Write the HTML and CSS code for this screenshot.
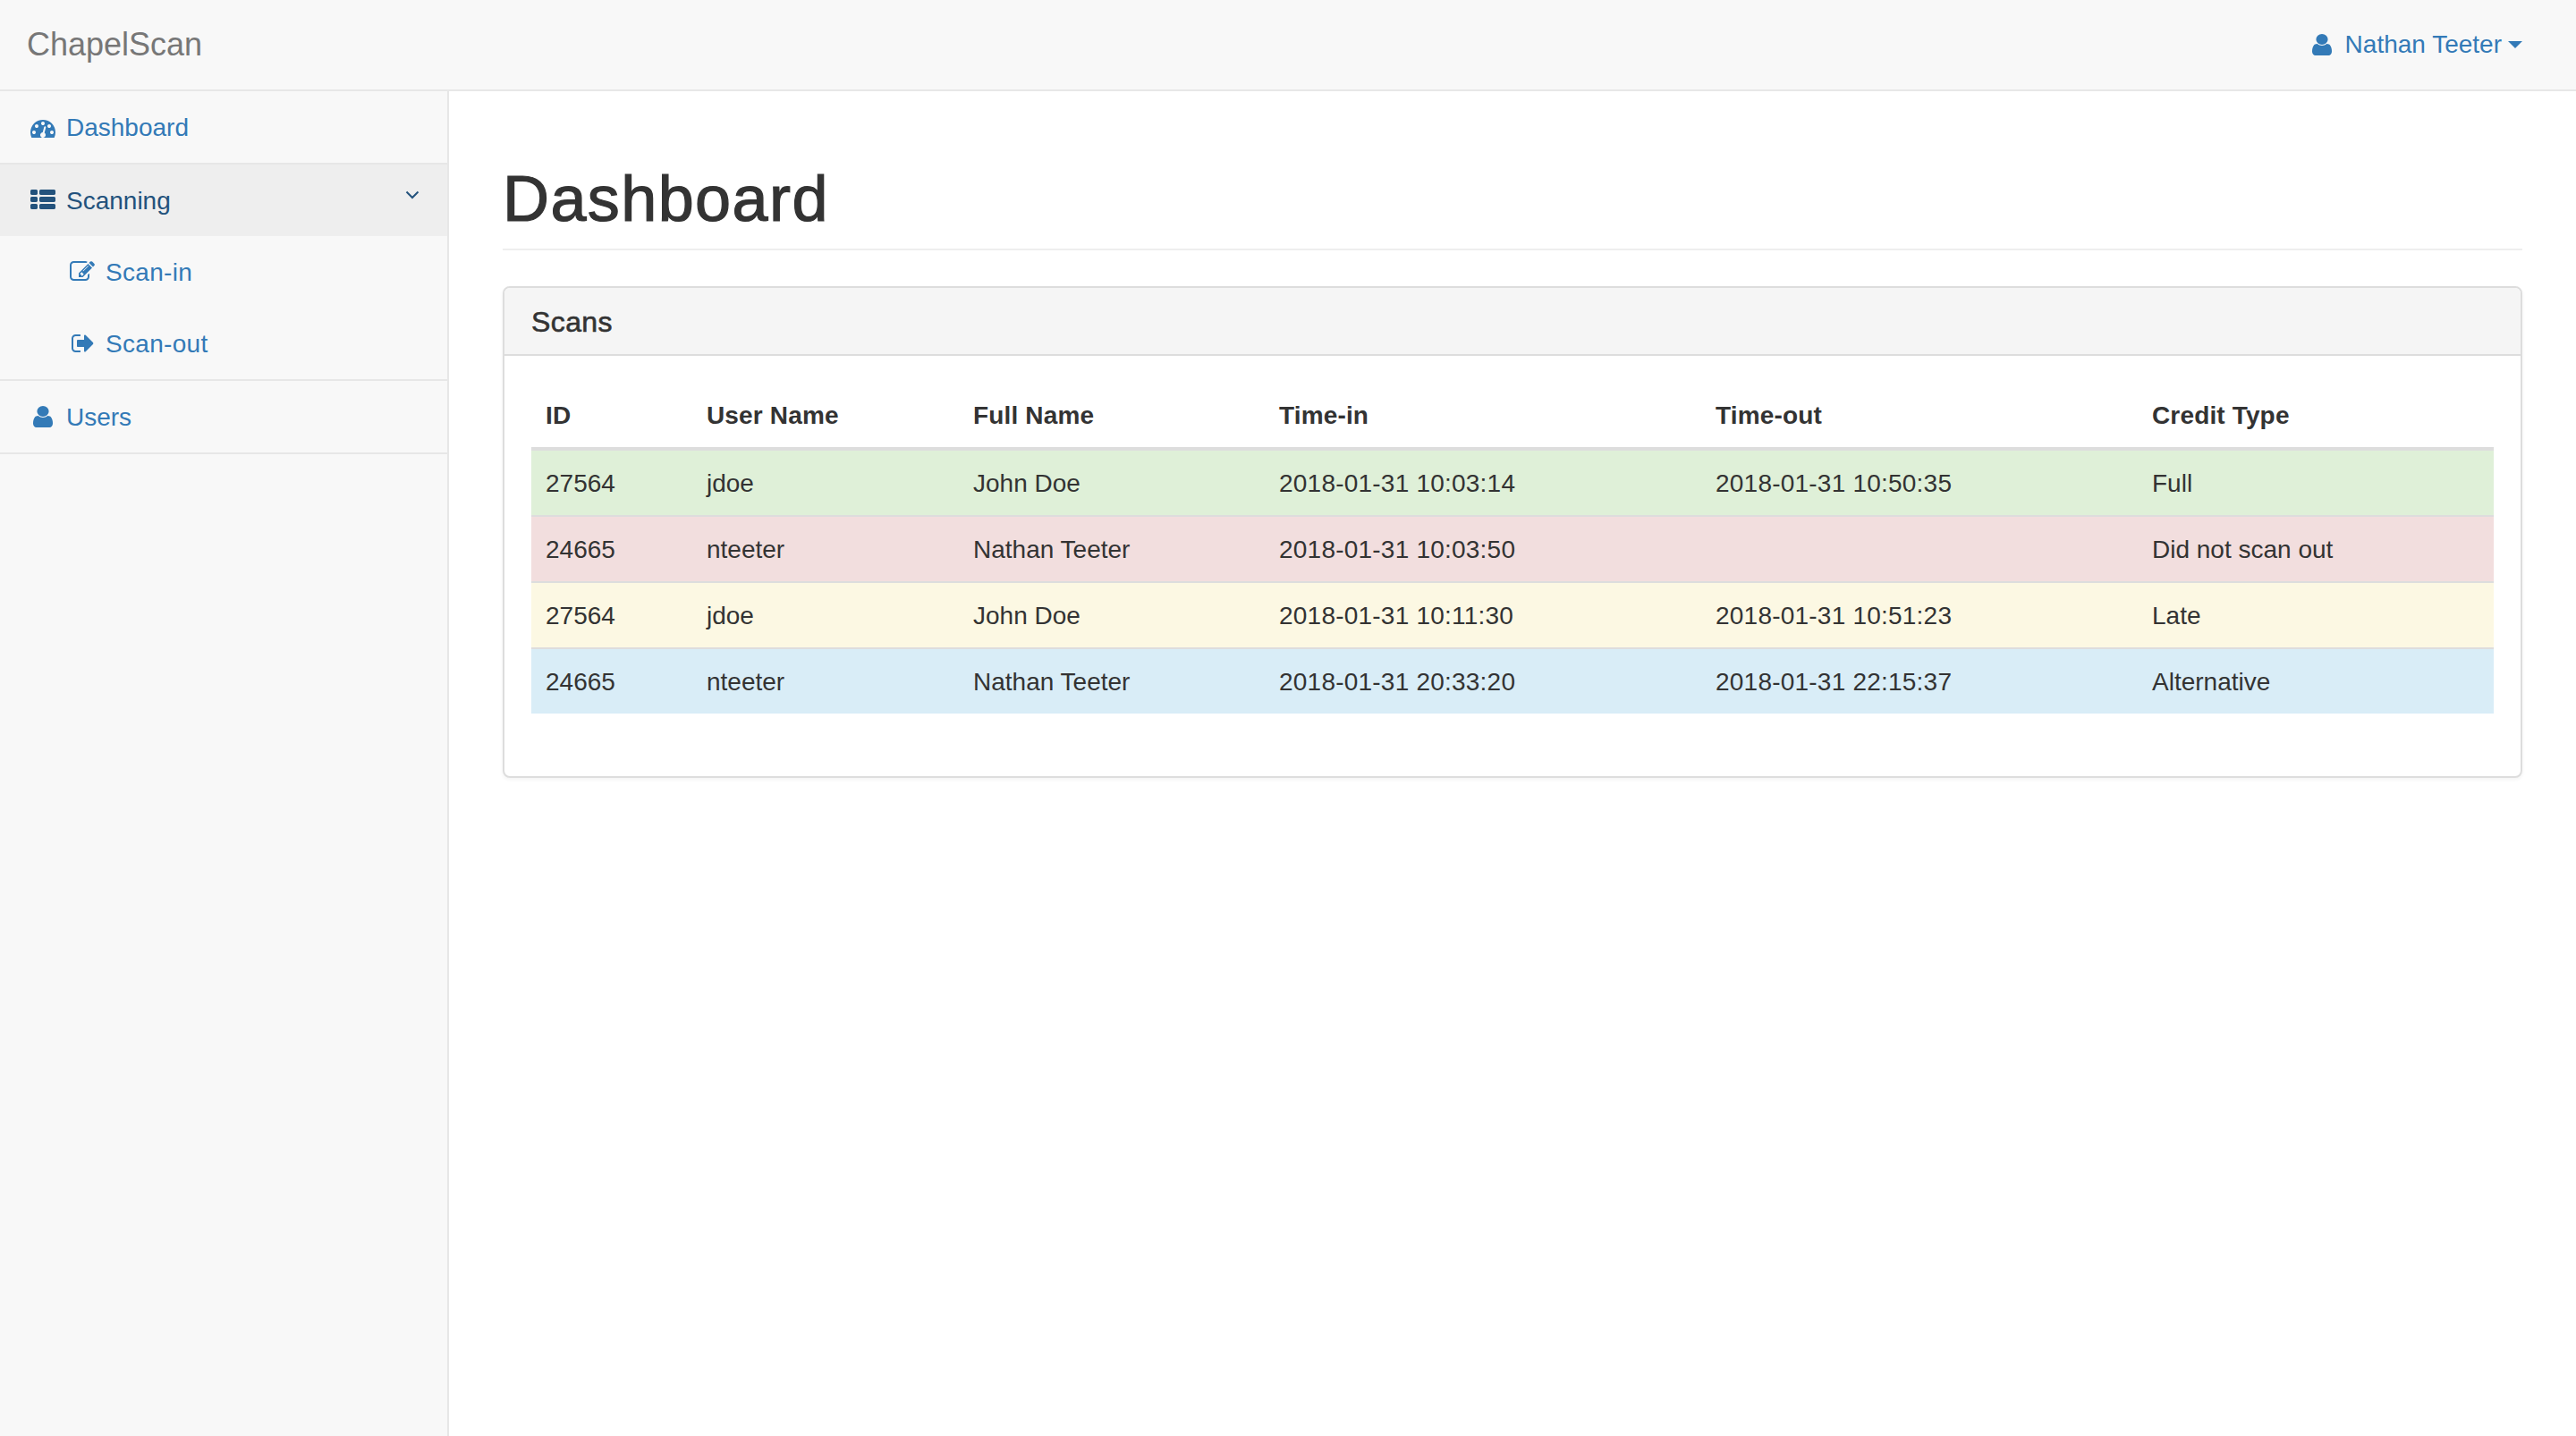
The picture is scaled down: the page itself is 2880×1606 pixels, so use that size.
FILE: index.html
```html
<!DOCTYPE html>
<html lang="en">
<head>
<meta charset="utf-8">
<title>ChapelScan</title>
<link rel="stylesheet" href="styles.css">
</head>
<body>
<svg class="sprite" xmlns="http://www.w3.org/2000/svg">
  <symbol id="i-dashboard" viewBox="0 128 1792 1408" preserveAspectRatio="none"><path d="M384 1152q0-53-37.5-90.5t-90.5-37.5-90.5 37.5-37.5 90.5 37.5 90.5 90.5 37.5 90.5-37.5 37.5-90.5zm192-448q0-53-37.5-90.5t-90.5-37.5-90.5 37.5-37.5 90.5 37.5 90.5 90.5 37.5 90.5-37.5 37.5-90.5zm428 481l101-382q6-26-7.5-48.5t-38.5-29.5-48 6.5-30 39.5l-101 382q-60 5-107 43.5t-63 98.5q-20 77 20 146t117 89 146-20 89-117q16-60-6-117t-72-91zm660-33q0-53-37.5-90.5t-90.5-37.5-90.5 37.5-37.5 90.5 37.5 90.5 90.5 37.5 90.5-37.5 37.5-90.5zm-640-640q0-53-37.5-90.5t-90.5-37.5-90.5 37.5-37.5 90.5 37.5 90.5 90.5 37.5 90.5-37.5 37.5-90.5zm448 192q0-53-37.5-90.5t-90.5-37.5-90.5 37.5-37.5 90.5 37.5 90.5 90.5 37.5 90.5-37.5 37.5-90.5zm320 448q0 261-141 483-19 29-54 29h-1402q-35 0-54-29-141-221-141-483 0-182 71-348t191-286 286-191 348-71 348 71 286 191 191 286 71 348z"/></symbol>
  <symbol id="i-list" viewBox="0 128 1792 1408" preserveAspectRatio="none"><path d="M512 1248v192q0 40-28 68t-68 28h-320q-40 0-68-28t-28-68v-192q0-40 28-68t68-28h320q40 0 68 28t28 68zm0-512v192q0 40-28 68t-68 28h-320q-40 0-68-28t-28-68v-192q0-40 28-68t68-28h320q40 0 68 28t28 68zm1280 512v192q0 40-28 68t-68 28h-960q-40 0-68-28t-28-68v-192q0-40 28-68t68-28h960q40 0 68 28t28 68zm-1280-1024v192q0 40-28 68t-68 28h-320q-40 0-68-28t-28-68v-192q0-40 28-68t68-28h320q40 0 68 28t28 68zm1280 512v192q0 40-28 68t-68 28h-960q-40 0-68-28t-28-68v-192q0-40 28-68t68-28h960q40 0 68 28t28 68zm0-512v192q0 40-28 68t-68 28h-960q-40 0-68-28t-28-68v-192q0-40 28-68t68-28h960q40 0 68 28t28 68z"/></symbol>
  <symbol id="i-edit" viewBox="0 128 1792 1408" preserveAspectRatio="none"><path d="M888 1184l116-116-152-152-116 116v56h96v96h56zm440-720q-16-16-33 1l-350 350q-17 17-1 33t33-1l350-350q17-17 1-33zm80 594v190q0 119-84.5 203.5t-203.5 84.5h-832q-119 0-203.5-84.5t-84.5-203.5v-832q0-119 84.5-203.5t203.5-84.5h832q63 0 117 25 15 7 18 23 3 17-9 29l-49 49q-14 14-32 8-23-6-45-6h-832q-66 0-113 47t-47 113v832q0 66 47 113t113 47h832q66 0 113-47t47-113v-126q0-13 9-22l64-64q15-15 35-7t20 29zm-96-738l288 288-672 672h-288v-288zm444 132l-92 92-288-288 92-92q28-28 68-28t68 28l152 152q28 28 28 68t-28 68z"/></symbol>
  <symbol id="i-signout" viewBox="0 256 1632 1280" preserveAspectRatio="none"><path d="M704 1440q0 4 1 20t.5 26.5-3 23.5-10 19.5-20.5 6.5h-320q-119 0-203.5-84.5t-84.5-203.5v-704q0-119 84.5-203.5t203.5-84.5h320q13 0 22.5 9.5t9.5 22.5q0 4 1 20t.5 26.5-3 23.5-10 19.5-20.5 6.5h-320q-66 0-113 47t-47 113v704q0 66 47 113t113 47h312l11.5 1 11.5 3 8 5.5 7 9 2 13.5zm928-544q0 26-19 45l-544 544q-19 19-45 19t-45-19-19-45v-288h-448q-26 0-45-19t-19-45v-384q0-26 19-45t45-19h448v-288q0-26 19-45t45-19 45 19l544 544q19 19 19 45z"/></symbol>
  <symbol id="i-user" viewBox="256 128 1280 1536" preserveAspectRatio="none"><path d="M1536 1399q0 109-62.5 187t-150.5 78h-854q-88 0-150.5-78t-62.5-187q0-85 8.5-160.5t31.5-152 58.5-131 94-89 134.5-34.5q131 128 313 128t313-128q76 0 134.5 34.5t94 89 58.5 131 31.5 152 8.5 160.5zm-256-887q0 159-112.5 271.5t-271.5 112.5-271.5-112.5-112.5-271.5 112.5-271.5 271.5-112.5 271.5 112.5 112.5 271.5z"/></symbol>
</svg>

<header class="navbar">
  <a class="brand" href="#">ChapelScan</a>
  <a class="user-menu" href="#">
    <span class="icon-box"><svg class="icon icon-user"><use href="#i-user"/></svg></span>
    <span>Nathan Teeter</span>
    <span class="caret"></span>
  </a>
</header>

<div class="layout">
  <nav class="sidebar">
    <ul class="side-nav">
      <li class="side-item">
        <a class="side-link" href="#"><span class="icon-box"><svg class="icon icon-wide"><use href="#i-dashboard"/></svg></span>Dashboard</a>
      </li>
      <li class="side-item">
        <a class="side-link side-link-active" href="#">
          <span class="icon-box"><svg class="icon icon-wide icon-raise"><use href="#i-list"/></svg></span>Scanning
          <svg class="chevron" viewBox="0 0 16 10"><path d="M1.5 1.5 8 8l6.5-6.5"/></svg>
        </a>
        <ul class="sub-nav">
          <li><a class="side-link" href="#"><span class="icon-box"><svg class="icon icon-wide icon-raise"><use href="#i-edit"/></svg></span>Scan-in</a></li>
          <li><a class="side-link" href="#"><span class="icon-box"><svg class="icon icon-signout icon-lift"><use href="#i-signout"/></svg></span>Scan-out</a></li>
        </ul>
      </li>
      <li class="side-item">
        <a class="side-link" href="#"><span class="icon-box"><svg class="icon icon-user icon-lift"><use href="#i-user"/></svg></span>Users</a>
      </li>
    </ul>
  </nav>

  <main class="content">
    <h1 class="page-title">Dashboard</h1>
    <section class="panel">
      <div class="panel-heading">Scans</div>
      <div class="panel-body">
        <table class="scans">
          <colgroup>
            <col class="col-id"><col class="col-user"><col class="col-name"><col class="col-time"><col class="col-time"><col class="col-credit">
          </colgroup>
          <thead>
            <tr><th>ID</th><th>User Name</th><th>Full Name</th><th>Time-in</th><th>Time-out</th><th>Credit Type</th></tr>
          </thead>
          <tbody>
            <tr class="row-success"><td>27564</td><td>jdoe</td><td>John Doe</td><td>2018-01-31 10:03:14</td><td>2018-01-31 10:50:35</td><td>Full</td></tr>
            <tr class="row-danger"><td>24665</td><td>nteeter</td><td>Nathan Teeter</td><td>2018-01-31 10:03:50</td><td></td><td>Did not scan out</td></tr>
            <tr class="row-warning"><td>27564</td><td>jdoe</td><td>John Doe</td><td>2018-01-31 10:11:30</td><td>2018-01-31 10:51:23</td><td>Late</td></tr>
            <tr class="row-info"><td>24665</td><td>nteeter</td><td>Nathan Teeter</td><td>2018-01-31 20:33:20</td><td>2018-01-31 22:15:37</td><td>Alternative</td></tr>
          </tbody>
        </table>
      </div>
    </section>
  </main>
</div>
</body>
</html>
```

FILE: styles.css
```css
* { box-sizing: border-box; }

html, body { height: 100%; }

body {
  margin: 0;
  display: flex;
  flex-direction: column;
  background: #fff;
  color: #333;
  font-family: "Liberation Sans", Arial, sans-serif;
  font-size: 28px;
  line-height: 40px;
}

a { color: #337ab7; text-decoration: none; }

.sprite { display: none; }

/* Navbar */
.navbar {
  flex: none;
  height: 102px;
  display: flex;
  justify-content: space-between;
  align-items: center;
  padding: 0 60px 0 30px;
  background: #f8f8f8;
  border-bottom: 2px solid #e7e7e7;
}

.brand { color: #777; font-size: 36px; }

.user-menu { display: flex; align-items: center; }

.caret {
  width: 0;
  height: 0;
  margin-left: 7px;
  border-top: 8px solid currentColor;
  border-left: 8px solid transparent;
  border-right: 8px solid transparent;
}

/* Icons */
.icon-box {
  flex: none;
  width: 36px;
  margin-right: 8px;
  display: flex;
  justify-content: center;
  align-items: center;
}

.icon { display: block; fill: currentColor; }
.icon-wide { width: 28px; height: 22px; }
.icon-user { width: 22px; height: 24px; }
.icon-signout { width: 25.5px; height: 20px; }
.icon-raise { transform: translateY(-2px); }
.icon-lift { transform: translateY(-1px); }

.chevron {
  width: 16px;
  height: 10px;
  margin-left: auto;
  margin-bottom: 14px;
  fill: none;
  stroke: currentColor;
  stroke-width: 2;
}

/* Layout */
.layout { flex: 1; display: flex; min-height: 0; }

.sidebar {
  flex: none;
  width: 502px;
  background: #f8f8f8;
  border-right: 2px solid #e7e7e7;
}

.side-nav, .sub-nav { list-style: none; margin: 0; padding: 0; }

.side-item { border-bottom: 2px solid #e7e7e7; }

.side-link {
  display: flex;
  align-items: center;
  height: 80px;
  padding: 2px 31px 0 30px;
}

.side-link-active { background: #eee; color: #23527c; }

.sub-nav { letter-spacing: .3px; }
.sub-nav .side-link { padding-left: 74px; }

/* Content */
.content { flex: 1; min-width: 0; padding: 0 60px; }

.page-title {
  margin: 80px 0 40px;
  padding-bottom: 16px;
  border-bottom: 2px solid #eee;
  font-size: 72px;
  font-weight: 400;
  line-height: 80px;
  letter-spacing: 1.4px;
  -webkit-text-stroke: 1.2px #333;
}

/* Panel */
.panel {
  background: #fff;
  border: 2px solid #ddd;
  border-radius: 8px;
  box-shadow: 0 2px 4px rgba(0, 0, 0, .05);
}

.panel-heading {
  height: 76px;
  padding: 0 30px;
  background: #f5f5f5;
  border-bottom: 2px solid #ddd;
  border-radius: 6px 6px 0 0;
  font-size: 32px;
  font-weight: 400;
  line-height: 76px;
  letter-spacing: .4px;
  -webkit-text-stroke: .6px #333;
}

.panel-body { padding: 30px 30px 70px; }

/* Table */
.scans { width: 100%; table-layout: fixed; border-collapse: separate; border-spacing: 0; }

.col-id { width: 180px; }
.col-user { width: 298px; }
.col-name { width: 342px; }
.col-time { width: 488px; }
.col-credit { width: 398px; }

.scans th, .scans td { padding: 17px 16px 15px; text-align: left; vertical-align: top; }

.scans th { height: 76px; border-bottom: 4px solid #ddd; font-weight: 700; letter-spacing: .15px; }

.scans td { height: 72px; }

.scans td:nth-child(4), .scans td:nth-child(5) { letter-spacing: .22px; }

.scans tbody tr + tr td { height: 74px; border-top: 2px solid #ddd; }

.row-success { background: #dff0d8; }
.row-danger { background: #f2dede; }
.row-warning { background: #fcf8e3; }
.row-info { background: #d9edf7; }
```
